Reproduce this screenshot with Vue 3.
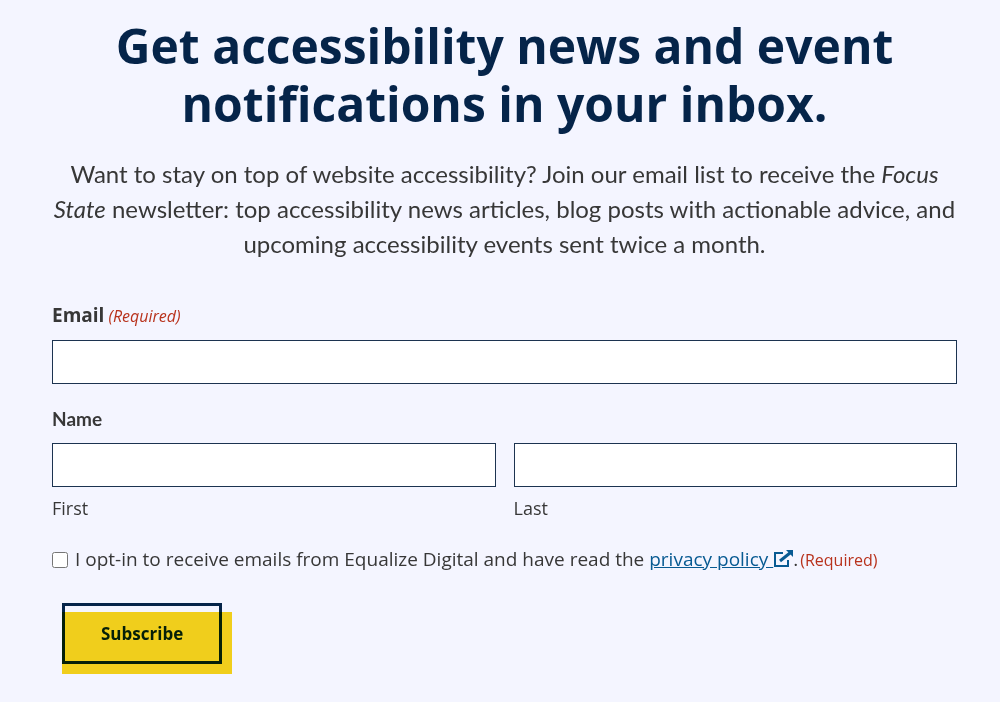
<template>
  <section class="newsletter">
    <h2>Get accessibility news and event notifications in your inbox.</h2>
    <p class="intro">
      Want to stay on top of website accessibility? Join our email list to receive the
      <em>Focus State</em> newsletter: top accessibility news articles, blog posts with actionable
      advice, and upcoming accessibility events sent twice a month.
    </p>

    <form @submit.prevent="handleSubmit">
      <div class="field">
        <label class="field-label" for="email">
          Email<span class="required"><em>(Required)</em></span>
        </label>
        <input type="email" v-model="form.email" id="email" name="email" required />
      </div>

      <fieldset class="field">
        <legend class="field-legend">Name</legend>
        <div class="name-row">
          <div class="name-part">
            <input type="text" v-model="form.first" id="first_name" name="first_name" />
            <label for="first_name">First</label>
          </div>
          <div class="name-part">
            <input type="text" v-model="form.last" id="last_name" name="last_name" />
            <label for="last_name">Last</label>
          </div>
        </div>
      </fieldset>

      <div class="consent">
        <input type="checkbox" v-model="form.optIn" id="opt_in" name="opt_in" required />
        <label for="opt_in">
          I opt-in to receive emails from Equalize Digital and have read the
          <a href="#privacy-policy">privacy policy
            <svg class="external" viewBox="0 0 20 18" aria-hidden="true">
              <path class="frame" d="M10 3H2v13h13v-6" />
              <path class="shaft" d="M7 11 17 3" />
              <path class="head" d="M13 0h7v7l-2-2-3-3z" />
            </svg></a>.<span class="required">(Required)</span>
        </label>
      </div>

      <button type="submit">Subscribe</button>
    </form>
  </section>
</template>

<script setup>
import { ref } from 'vue'

// Reactive state for the form data
const form = ref({
  email: '',
  first: '',
  last: '',
  optIn: false,
})

// Reset the form once it is submitted
const handleSubmit = () => {
  form.value = { email: '', first: '', last: '', optIn: false }
}
</script>

<style>
body {
  background-color: #f4f5ff;
}
</style>

<style scoped>
.newsletter {
  padding: 17px 43px 28px 52px;
  color: #373737;
  font-family: 'Open Sans', sans-serif;
  font-size: 18px;
  line-height: 24px;
}

h2 {
  margin: 0 auto;
  max-width: 820px;
  color: #052449;
  font-size: 48px;
  font-weight: 700;
  line-height: 58px;
  text-align: center;
}

.intro {
  margin: 23px 0 0;
  font-family: Lato, sans-serif;
  font-size: 24px;
  line-height: 35px;
  text-align: center;
}

form {
  margin-top: 42px;
}

.field {
  margin: 0 0 23px;
  padding: 0;
  border: 0;
}

.field-label,
.field-legend {
  display: block;
  margin-bottom: 12px;
  padding: 0;
  font-size: 19px;
  font-weight: 700;
}

.field-legend {
  font-family: Lato, sans-serif;
}

.field-label .required {
  margin-left: 4px;
}

.required {
  margin-left: 2px;
  color: #b8321c;
  font-size: 16px;
  font-weight: 400;
}

input[type='email'],
input[type='text'] {
  display: block;
  box-sizing: border-box;
  width: 100%;
  height: 44px;
  padding: 8px;
  border: 1px solid #1c3350;
  background-color: #fff;
  font: inherit;
}

.name-row {
  display: grid;
  grid-template-columns: 1fr 1fr;
  gap: 18px;
}

.name-part label {
  display: block;
  margin-top: 9px;
}

.consent {
  display: flex;
  align-items: center;
  gap: 7px;
  margin-top: 27px;
  font-size: 19px;
}

.consent input {
  flex: none;
  width: 16px;
  height: 16px;
  margin: 0;
}

a {
  color: #075a92;
}

.external {
  width: 20px;
  height: 18px;
  vertical-align: -2px;
}

.frame,
.shaft {
  fill: none;
  stroke: currentColor;
  stroke-width: 2;
}

.shaft {
  stroke-width: 3;
}

.head {
  fill: currentColor;
}

button {
  position: relative;
  display: block;
  margin: 31px 0 0 10px;
  padding: 16px 36px 15px;
  border: 3px solid #052449;
  background: transparent;
  color: #052449;
  font-family: inherit;
  font-size: 17px;
  font-weight: 700;
  line-height: 24px;
  cursor: pointer;
}

/* Yellow block shifted down and right, tinting the outline */
button::after {
  content: '';
  position: absolute;
  top: 6px;
  right: -13px;
  bottom: -13px;
  left: -3px;
  background-color: #fbd71c;
  mix-blend-mode: multiply;
}
</style>
